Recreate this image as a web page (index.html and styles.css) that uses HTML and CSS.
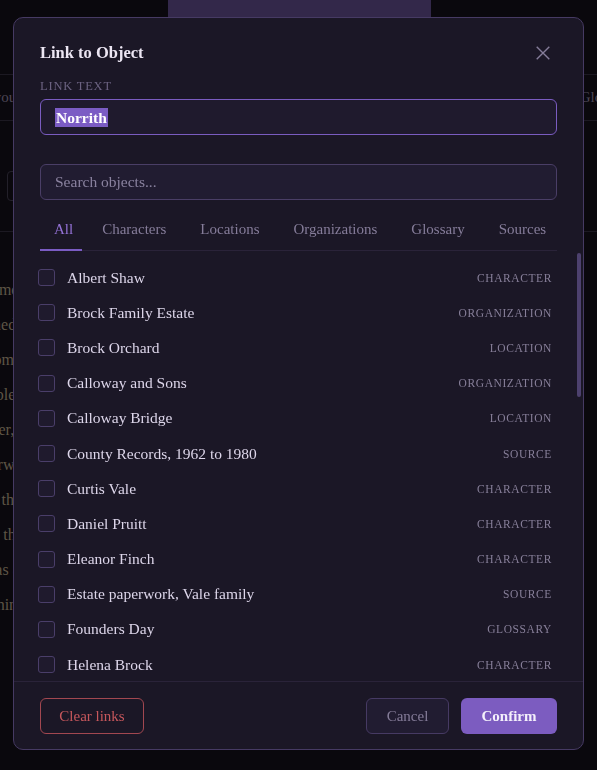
FILE: index.html
```html
<!DOCTYPE html>
<html lang="en">
<head>
<meta charset="utf-8">
<title>Link to Object</title>
<link rel="stylesheet" href="styles.css">
</head>
<body>
<div class="page">
  <div class="topbar"><div class="toptab"></div></div>
  <div class="toolbar"><span class="tb-left">Layout</span><span class="tb-right">Glossary</span></div>
  <div class="searchrow"><div class="pagesearch"></div></div>
  <div class="prose">
    <p>The morning came slow over the valley, and the old house</p>
    <p>opened its shutters one by one, the way Norrith remembered</p>
    <p>it from childhood, when the orchard was still worth the</p>
    <p>trouble. Calloway had said the bridge would hold another</p>
    <p>winter, though nobody believed him. The records said</p>
    <p>otherwise, in a hand that nobody in town would own. She</p>
    <p>kept the ledger in a drawer and did not open it again, not</p>
    <p>until the day the letter from Helena came, sealed in red.</p>
    <p>It was a plain letter, and she read it twice before the</p>
    <p>meaning settled, heavy as a stone in the creek bed.</p>
  </div>
</div>

<div class="modal">
  <div class="m-head">
    <h2 class="m-title">Link to Object</h2>
    <svg class="close" width="14" height="14" viewBox="0 0 14 14"><path d="M0.7 0.7L13.3 13.3M13.3 0.7L0.7 13.3" stroke="#857c99" stroke-width="1.4" fill="none"/></svg>
  </div>
  <div class="m-body">
    <div class="label">Link text</div>
    <div class="field focused"><span class="sel">Norrith</span></div>
    <div class="field search"><span class="ph">Search objects...</span></div>
    <div class="tabs">
      <span class="tab active">All</span>
      <span class="tab">Characters</span>
      <span class="tab">Locations</span>
      <span class="tab">Organizations</span>
      <span class="tab">Glossary</span>
      <span class="tab">Sources</span>
    </div>
  </div>
  <div class="list-wrap">
    <ul class="list">
      <li class="row"><span class="cb"></span><span class="name">Albert Shaw</span><span class="type">Character</span></li>
      <li class="row"><span class="cb"></span><span class="name">Brock Family Estate</span><span class="type">Organization</span></li>
      <li class="row"><span class="cb"></span><span class="name">Brock Orchard</span><span class="type">Location</span></li>
      <li class="row"><span class="cb"></span><span class="name">Calloway and Sons</span><span class="type">Organization</span></li>
      <li class="row"><span class="cb"></span><span class="name">Calloway Bridge</span><span class="type">Location</span></li>
      <li class="row"><span class="cb"></span><span class="name">County Records, 1962 to 1980</span><span class="type">Source</span></li>
      <li class="row"><span class="cb"></span><span class="name">Curtis Vale</span><span class="type">Character</span></li>
      <li class="row"><span class="cb"></span><span class="name">Daniel Pruitt</span><span class="type">Character</span></li>
      <li class="row"><span class="cb"></span><span class="name">Eleanor Finch</span><span class="type">Character</span></li>
      <li class="row"><span class="cb"></span><span class="name">Estate paperwork, Vale family</span><span class="type">Source</span></li>
      <li class="row"><span class="cb"></span><span class="name">Founders Day</span><span class="type">Glossary</span></li>
      <li class="row"><span class="cb"></span><span class="name">Helena Brock</span><span class="type">Character</span></li>
      <li class="row"><span class="cb"></span><span class="name">Hollow Creek</span><span class="type">Location</span></li>
      <li class="row"><span class="cb"></span><span class="name">Ivy Calloway</span><span class="type">Character</span></li>
    </ul>
    <div class="thumb"></div>
  </div>
  <div class="m-foot">
    <button class="btn danger">Clear links</button>
    <div class="foot-right">
      <button class="btn ghost">Cancel</button>
      <button class="btn primary">Confirm</button>
    </div>
  </div>
</div>
</body>
</html>
```

FILE: styles.css
```css
* { box-sizing: border-box; }
html, body { margin: 0; padding: 0; }
body {
  width: 597px;
  height: 770px;
  overflow: hidden;
  background: #0a080d;
  font-family: "Liberation Serif", "DejaVu Serif", serif;
  color: #ddd6ea;
}

/* dimmed page behind the dialog */
.page { height: 770px; display: flex; flex-direction: column; overflow: hidden; }
.topbar { height: 17px; display: flex; justify-content: center; flex: none; }
.toptab { width: 263px; margin-left: 1px; background: #33284a; }
.toolbar {
  margin-top: 57px;
  height: 47px;
  flex: none;
  border-top: 1px solid #1c1922;
  border-bottom: 1px solid #1c1922;
  display: flex;
  justify-content: space-between;
  align-items: center;
  font-size: 15px;
  color: #4d4655;
}
.tb-left { margin-left: -22px; }
.tb-right { margin-right: -36px; }
.searchrow { height: 111px; flex: none; border-bottom: 1px solid #1c1922; display: flex; align-items: center; padding-left: 7px; }
.pagesearch { width: 300px; height: 30px; border: 1px solid #23202a; border-radius: 4px; margin-top: 20px; }
.prose {
  padding: 40px 0 0 0;
  margin-left: -30px;
  font-size: 16px;
  color: #5e5546;
  line-height: 35px;
}
.prose p { margin: 0; white-space: nowrap; }

/* dialog */
.modal {
  position: fixed;
  left: 13px;
  top: 17px;
  width: 571px;
  height: 733px;
  background: #1b1726;
  border: 1px solid #463a63;
  border-radius: 10px;
  display: flex;
  flex-direction: column;
  overflow: hidden;
}
.m-head {
  display: flex;
  justify-content: space-between;
  align-items: center;
  padding: 25px 33px 0 26px;
}
.m-title {
  margin: 0;
  font-size: 16.5px;
  font-weight: 700;
  line-height: 20px;
  color: #ece6f3;
}
.close { display: block; }
.m-body { padding: 0 26px; }
.label {
  margin-top: 16px;
  font-size: 12.5px;
  line-height: 14px;
  letter-spacing: 0.8px;
  text-transform: uppercase;
  color: #6b6281;
}
.field {
  margin-top: 6px;
  height: 36px;
  border: 1px solid #4a3e66;
  border-radius: 6px;
  background: #1f1a2d;
  display: flex;
  align-items: center;
  padding: 0 14px;
  font-size: 15.5px;
}
.field.focused { border-color: #7a5cc0; }
.sel { background: #7b5cc4; color: #ffffff; font-weight: 700; padding: 0 1px; line-height: 19px; }
.field.search { margin-top: 29px; background: #211c31; }
.ph { color: #8a829f; }
.tabs {
  margin-top: 12px;
  display: flex;
  gap: 6px;
  border-bottom: 1px solid #2a2339;
  white-space: nowrap;
}
.tab {
  padding: 8px 14px 10px;
  font-size: 15px;
  line-height: 19px;
  color: #857c99;
  border-bottom: 2px solid transparent;
  margin-bottom: -1px;
}
.tab.active { color: #9472d6; border-bottom-color: #7b5cc4; padding-right: 9px; }

.list-wrap {
  position: relative;
  flex: 1;
  overflow: hidden;
}
.list {
  list-style: none;
  margin: 0;
  padding: 9px 0 0 0;
}
.row {
  height: 35.2px;
  display: flex;
  align-items: center;
  padding: 0 31px 0 24px;
}
.cb {
  width: 17px;
  height: 17px;
  border: 1.5px solid #4a3e69;
  border-radius: 3px;
  background: #1f1a2d;
  flex: none;
}
.name {
  margin-left: 12px;
  flex: 1;
  font-size: 15.5px;
  color: #ddd6ea;
  white-space: nowrap;
}
.type {
  font-size: 11.5px;
  letter-spacing: 0.6px;
  text-transform: uppercase;
  color: #877f99;
  white-space: nowrap;
}
.thumb {
  position: absolute;
  right: 2px;
  top: 2px;
  width: 4px;
  height: 144px;
  border-radius: 2px;
  background: #4d416e;
}

.m-foot {
  border-top: 1px solid #2a2339;
  padding: 16px 26px 15px;
  display: flex;
  justify-content: space-between;
  align-items: center;
}
.foot-right { display: flex; gap: 12px; }
.btn {
  height: 36px;
  border-radius: 6px;
  font-family: inherit;
  font-size: 15px;
  padding: 0;
  white-space: nowrap;
  background: transparent;
  border: 1px solid transparent;
}
.btn.danger { width: 104px; border-color: #a24750; color: #c6575c; }
.btn.ghost { width: 83px; border-color: #463a63; background: #211c31; color: #857c99; }
.btn.primary { width: 96px; background: #7c5cc0; color: #f4f0fb; font-weight: 700; }
```
